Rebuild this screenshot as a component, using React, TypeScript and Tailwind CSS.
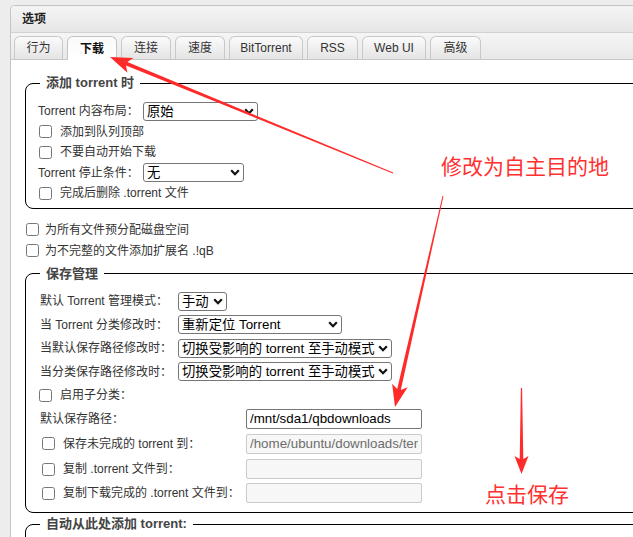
import React from 'react';

const tabs = [
  { label: '行为', w: 'w-[49px]' },
  { label: '下载', w: 'w-[50px]', active: true },
  { label: '连接', w: 'w-[50px]' },
  { label: '速度', w: 'w-[50px]' },
  { label: 'BitTorrent', w: 'w-[74px]' },
  { label: 'RSS', w: 'w-[51px]' },
  { label: 'Web UI', w: 'w-[64px]' },
  { label: '高级', w: 'w-[51px]' },
];

function Select({ value, className }: { value: string; className: string }) {
  return (
    <div className={`relative h-[19px] ${className}`}>
      <select className="appearance-none w-full h-full border border-[#767676] rounded-[3px] bg-white pl-[3px] pr-[14px] text-[13.33px] leading-none text-black outline-none">
        <option>{value}</option>
      </select>
      <svg className="absolute right-[4px] top-[6px] w-[10px] h-[7px] pointer-events-none" viewBox="0 0 10 7">
        <path d="M1.2 1.3 L5 5.2 L8.8 1.3" fill="none" stroke="#111" strokeWidth="2.2" />
      </svg>
    </div>
  );
}

function TextBox({ value, disabled }: { value?: string; disabled?: boolean }) {
  return (
    <input
      readOnly
      value={value ?? ''}
      disabled={disabled}
      className={
        disabled
          ? 'w-[176px] h-[20px] border border-[#cbcbcb] rounded-[2px] bg-[#f7f7f7] px-[3px] text-[13.33px] text-[#6d6d6d] outline-none'
          : 'w-[176px] h-[20px] border border-[#767676] rounded-[2px] bg-white px-[3px] text-[13.33px] text-black outline-none'
      }
    />
  );
}

function Check({ label, className = '' }: { label: string; className?: string }) {
  return (
    <label className={`flex items-center ${className}`}>
      <input type="checkbox" className="m-0 w-[13px] h-[13px]" />
      <span className="ml-[8px]">{label}</span>
    </label>
  );
}

export default function App() {
  return (
    <div className="relative w-[633px] h-[537px] overflow-hidden bg-[#ededed] font-['Liberation_Sans','Noto_Sans_CJK_SC',sans-serif] text-[12px] text-[#333]">
      <div className="ml-[10px] mt-[5px] w-[700px] h-[560px] border-l border-t border-[#c4c4c4] rounded-tl-[5px] bg-white overflow-hidden">
        {/* title bar */}
        <div className="h-[27px] flex items-center pl-[11px] bg-gradient-to-b from-[#f4f4f4] to-[#e6e6e6] border-b border-[#d2d2d2]">
          <span className="font-bold text-[12px] text-[#222]">选项</span>
        </div>

        {/* tabs */}
        <div className="h-[27px] flex items-end gap-[4px] pl-[3px] bg-gradient-to-b from-[#f5f5f5] to-[#e8e8e8] border-b border-[#c8c8c8]">
          {tabs.map((t) => (
            <div
              key={t.label}
              className={
                t.active
                  ? `${t.w} h-[24px] -mb-px flex items-center justify-center rounded-t-[6px] border border-b-0 border-[#c4c4c4] bg-gradient-to-b from-[#fafafa] to-white font-bold text-[#111]`
                  : `${t.w} h-[23px] flex items-center justify-center rounded-t-[6px] border border-b-0 border-[#c8c8c8] bg-gradient-to-b from-[#fbfbfb] to-[#e4e4e4] text-[#333]`
              }
            >
              {t.label}
            </div>
          ))}
        </div>

        {/* content */}
        <div className="pt-[15px]">
          <fieldset className="ml-[14px] w-[680px] border border-black rounded-[8px] pl-[12px] pt-[10px] pb-[4.5px]">
            <legend className="ml-[2px] px-[6px] text-[13px] font-bold leading-[16px] text-[#444]">添加 torrent 时</legend>
            <div className="h-[20.5px] flex items-center">
              <span className="w-[105px]">Torrent 内容布局：</span>
              <Select value="原始" className="w-[115px]" />
            </div>
            <Check label="添加到队列顶部" className="h-[20.5px] ml-[1px]" />
            <Check label="不要自动开始下载" className="h-[20.5px] ml-[1px]" />
            <div className="h-[20.5px] flex items-center">
              <span className="w-[105px]">Torrent 停止条件：</span>
              <Select value="无" className="w-[101px]" />
            </div>
            <Check label="完成后删除 .torrent 文件" className="h-[20.5px] ml-[1px]" />
          </fieldset>

          <div className="mt-[10px] ml-[15px]">
            <label className="h-[21px] flex items-center">
              <input type="checkbox" className="m-0 w-[13px] h-[13px]" />
              <span className="ml-[6px]">为所有文件预分配磁盘空间</span>
            </label>
            <label className="h-[21px] flex items-center">
              <input type="checkbox" className="m-0 w-[13px] h-[13px]" />
              <span className="ml-[6px]">为不完整的文件添加扩展名 .!qB</span>
            </label>
          </div>

          <fieldset className="mt-[4.5px] ml-[14px] w-[680px] border border-black rounded-[8px] pl-[14px] pt-[8px] pb-[7px]">
            <legend className="ml-[0px] px-[6px] text-[13px] font-bold leading-[16px] text-[#444]">保存管理</legend>
            <div className="h-[23.5px] flex items-center">
              <span className="w-[138px]">默认 Torrent 管理模式：</span>
              <Select value="手动" className="w-[49px]" />
            </div>
            <div className="h-[23.5px] flex items-center">
              <span className="w-[138px]">当 Torrent 分类修改时：</span>
              <Select value="重新定位 Torrent" className="w-[164px]" />
            </div>
            <div className="h-[23.5px] flex items-center">
              <span className="w-[138px]">当默认保存路径修改时：</span>
              <Select value="切换受影响的 torrent 至手动模式" className="w-[214px]" />
            </div>
            <div className="h-[23.5px] flex items-center">
              <span className="w-[138px]">当分类保存路径修改时：</span>
              <Select value="切换受影响的 torrent 至手动模式" className="w-[214px]" />
            </div>
            <Check label="启用子分类：" className="h-[23.5px] -ml-[1px]" />
            <div className="h-[23px] flex items-center">
              <span className="w-[206px]">默认保存路径：</span>
              <TextBox value="/mnt/sda1/qbdownloads" />
            </div>
            <div className="h-[27px] flex items-center">
              <label className="w-[206px] flex items-center pl-[2px]">
                <input type="checkbox" className="m-0 w-[13px] h-[13px]" />
                <span className="ml-[8px]">保存未完成的 torrent 到：</span>
              </label>
              <TextBox value="/home/ubuntu/downloads/temp" disabled />
            </div>
            <div className="h-[24px] flex items-center">
              <label className="w-[206px] flex items-center pl-[2px]">
                <input type="checkbox" className="m-0 w-[13px] h-[13px]" />
                <span className="ml-[8px]">复制 .torrent 文件到：</span>
              </label>
              <TextBox disabled />
            </div>
            <div className="h-[24px] flex items-center">
              <label className="w-[206px] flex items-center pl-[2px]">
                <input type="checkbox" className="m-0 w-[13px] h-[13px]" />
                <span className="ml-[8px]">复制下载完成的 .torrent 文件到：</span>
              </label>
              <TextBox disabled />
            </div>
          </fieldset>

          <fieldset className="mt-[3px] ml-[14px] w-[680px] h-[60px] border border-black rounded-[8px] pl-[14px]">
            <legend className="px-[6px] text-[13px] font-bold leading-[16px] text-[#444]">自动从此处添加 torrent:</legend>
          </fieldset>
        </div>
      </div>

      {/* red annotations */}
      <svg className="absolute inset-0 pointer-events-none" width="633" height="537" viewBox="0 0 633 537">
        <polygon
          fill="#ff2b2b"
          points="110,57 127.4,72.7 126.0,65.5 392.8,173.5 393.2,172.5 127.4,62.1 133.4,57.9"
        />
        <polygon
          fill="#ff2b2b"
          points="395,407 407.7,387.3 400.8,389.9 443.5,196.1 442.5,195.9 397.2,389.1 392.1,383.8"
        />
        <polygon
          fill="#ff2b2b"
          points="521.5,474 528.5,456 523.3,459 522.1,388 520.9,388 519.7,459 514.5,456"
        />
      </svg>
      <div className="absolute left-[441px] top-[152px] text-[21px] leading-[26px] text-[#ff3030] font-['Noto_Sans_CJK_SC',sans-serif]">
        修改为自主目的地
      </div>
      <div className="absolute left-[485px] top-[480px] text-[21px] leading-[26px] text-[#ff3030] font-['Noto_Sans_CJK_SC',sans-serif]">
        点击保存
      </div>
    </div>
  );
}
